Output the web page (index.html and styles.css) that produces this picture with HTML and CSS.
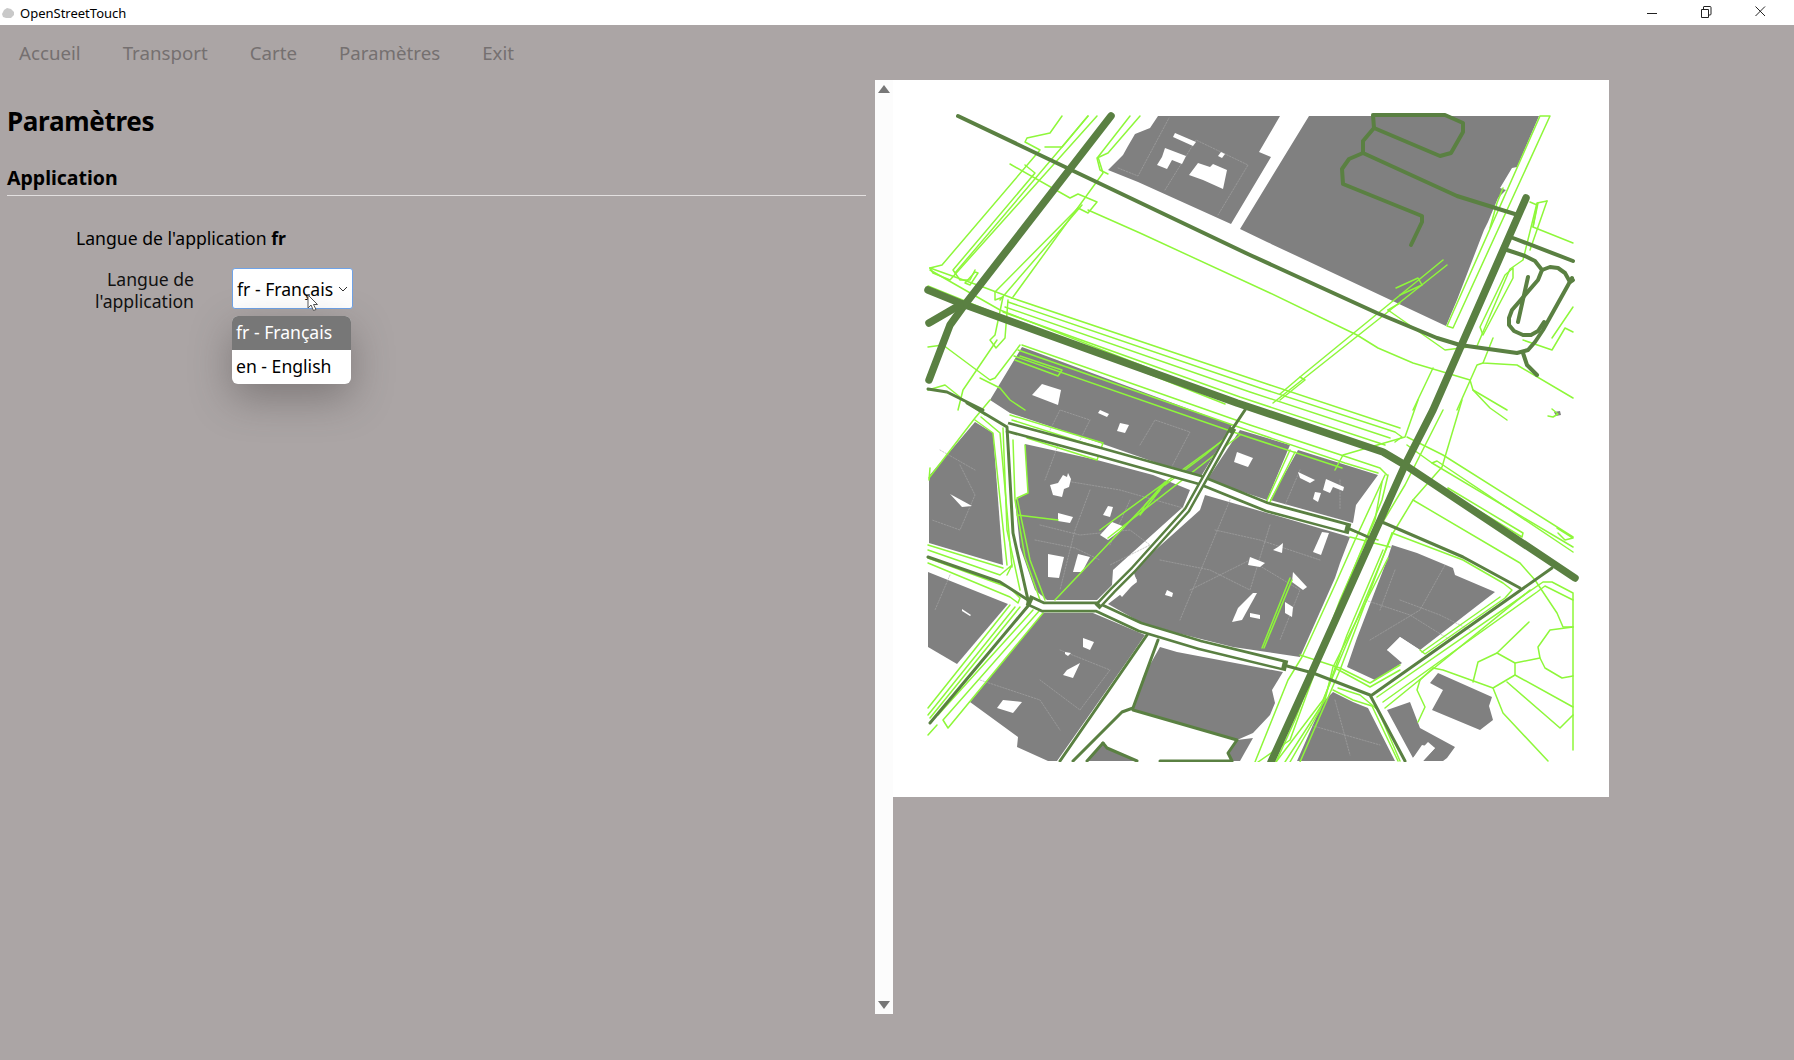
FILE: index.html
```html
<!DOCTYPE html>
<html lang="fr">
<head>
  <meta charset="UTF-8" />
  <title>OpenStreetTouch</title>
  <link rel="stylesheet" href="styles.css">
</head>
<body>
  <header class="titlebar">
    <svg class="app-icon" viewBox="0 0 14 14"><path d="M1 8 L3 4 L6 2 L10 3 L13 6 L13 9 L10 12 L5 12 L2 11 Z" /></svg>
    <span class="app-name">OpenStreetTouch</span>
    <div class="win-controls">
      <svg viewBox="0 0 54 18"><path d="M0 9.5 H10" /></svg>
      <svg viewBox="0 0 54 18"><path d="M0.5 5.5 H7.5 V13.5 H0.5 Z M2.5 5 V3 Q2.5 2.5 3 2.5 H9 Q10 2.5 10 3.5 V10 Q10 11 9 11 H8" /></svg>
      <svg class="close" viewBox="0 0 39 18"><path d="M0.5 2.5 L10 12 M10 2.5 L0.5 12" /></svg>
    </div>
  </header>

  <div class="content">
    <div class="left-panel">
      <nav class="menu">
        <a>Accueil</a>
        <a>Transport</a>
        <a>Carte</a>
        <a>Paramètres</a>
        <a>Exit</a>
      </nav>

      <h1>Paramètres</h1>
      <h2>Application</h2>

      <p class="current-lang">Langue de l'application <b>fr</b></p>

      <div class="lang-row">
        <label>Langue de l'application</label>
        <div class="select">
          <span>fr - Français</span>
          <svg class="chevron" viewBox="0 0 10 6"><path d="M1 1 L5 5 L9 1" /></svg>
          <div class="dropdown">
            <div class="option selected">fr - Français</div>
            <div class="option">en - English</div>
          </div>
          <svg class="cursor" viewBox="0 0 12 18"><path d="M1 1 V14 L4 11 L6.5 16.5 L9 15.5 L6.5 10.5 L10.5 10.5 Z" /></svg>
        </div>
      </div>
    </div>

    <div class="viewer">
      <div class="scrollbar">
        <span class="arrow up"></span>
        <span class="arrow down"></span>
      </div>
      <svg class="map" viewBox="893 80 716 717">
        <defs>
          <clipPath id="mapclip"><rect x="923" y="111" width="658" height="651" /></clipPath>
        </defs>
        <g clip-path="url(#mapclip)">
          <!-- blocks -->
          <g class="block">
            <polygon points="1158,116 1280,116 1259,152 1271,157 1231,224 1138,182 1108,170 1123,155 1128,146 1135,134 1150,128" />
            <polygon points="1309,116 1539,116 1517,167 1512,168 1500,188 1506,190 1498,198 1488,222 1484,230 1457,300 1446,326 1267,242 1240,229" />
            <polygon points="1022,347 1232,425 1200,478 1100,443 1010,413 990,400" />
            <polygon points="929,476 975,422 993,433 1003,565 929,543" />
            <polygon points="1025,444 1097,460 1153,475 1190,490 1183,507 1113,570 1112,585 1097,600 1047,600 1035,590 1020,547 1015,500 1028,493" />
            <polygon points="1205,495 1350,537 1340,563 1335,578 1300,657 1233,647 1177,633 1140,622 1108,604 1137,582 1133,570 1200,510" />
            <polygon points="1240,430 1290,445 1267,500 1207,480" />
            <polygon points="1298,450 1378,475 1356,505 1353,523 1270,500" />
            <polygon points="928,572 1008,604 957,664 928,647" />
            <polygon points="1043,613 970,702 1018,737 1017,747 1048,761 1057,761 1130,657 1145,635 1093,613" />
            <polygon points="1160,647 1177,652 1283,672 1272,690 1275,703 1270,715 1253,733 1237,740 1133,710 1140,690 1143,677" />
            <polygon points="1237,740 1253,738 1240,761 1232,761 1228,753" />
            <polygon points="1103,743 1087,761 1137,761 1107,748" />
            <polygon points="1392,545 1417,553 1453,568 1455,575 1495,592 1420,650 1400,637 1387,650 1402,663 1375,680 1347,667 1357,638 1387,560" />
            <polygon points="1333,692 1353,702 1368,708 1395,761 1297,761 1323,702" />
            <polygon points="1387,710 1410,702 1420,728 1455,747 1447,758 1443,761 1423,761 1435,748 1422,745 1413,758 1407,747" />
            <polygon points="1438,673 1492,697 1489,706 1493,720 1480,730 1432,710 1443,690 1430,683" />
            <polygon points="1554,412 1560,411 1561,415 1556,416" />
          </g>

          <!-- lot lines -->
          <g class="lot">
            <polyline points="1118,168 1138,176 1169,118" />
            <polyline points="1165,190 1196,140 1248,165 1218,215" />
            <polyline points="1050,430 1060,410 1090,420 1075,450" />
            <polyline points="1140,445 1155,420 1190,432 1170,470" />
            <polyline points="960,465 975,495 960,530 932,520" />
            <polyline points="1040,525 1080,535 1130,530 1150,545 1110,565" />
            <polyline points="1060,480 1120,490 1190,510" />
            <polyline points="1215,530 1260,540 1320,560" />
            <polyline points="1190,590 1250,560 1300,590 1280,640" />
            <polyline points="1060,650 1110,670 1080,710 1040,680" />
            <polyline points="980,680 1040,700 1060,730" />
            <polyline points="1400,600 1440,615 1470,630" />
            <polyline points="1370,640 1420,610 1445,565" />
            <polyline points="1310,725 1380,745" />
            <polyline points="1335,700 1350,755" />
            <polyline points="1035,540 1075,548 1100,560" />
            <polyline points="1090,490 1075,530 1060,590" />
            <polyline points="1130,500 1110,545" />
            <polyline points="1230,500 1205,560 1180,620" />
            <polyline points="1270,525 1250,590" />
            <polyline points="1160,560 1210,570 1250,590" />
            <polyline points="1365,600 1410,615 1450,640" />
            <polyline points="1395,570 1380,610" />
            <polyline points="1300,470 1285,505" />
            <polyline points="1340,480 1340,510" />
            <polyline points="1060,440 1045,480" />
            <polyline points="940,450 975,470" />
            <polyline points="950,575 935,610" />
          </g>

          <!-- buildings -->
          <g class="hole">
            <polygon points="1175,133 1196,142 1193,146 1173,137" />
            <polygon points="1165,148 1186,156 1182,164 1172,160 1167,169 1157,165 1162,157" />
            <polygon points="1198,163 1210,167 1213,164 1227,170 1223,189 1203,180 1189,175" />
            <polygon points="1221,152 1225,154 1222,158 1218,156" />
            <polygon points="1042,384 1061,390 1058,405 1032,395" />
            <polygon points="1100,410 1109,414 1107,417 1098,413" />
            <polygon points="1120,423 1129,425 1125,433 1117,431" />
            <polygon points="1237,452 1253,458 1248,467 1234,462" />
            <polygon points="1063,475 1067,477 1068,473 1071,479 1069,487 1064,489 1062,497 1053,495 1050,485 1058,483" />
            <polygon points="1058,513 1073,517 1070,523 1058,521" />
            <polygon points="1108,506 1113,507 1110,517 1103,515" />
            <polygon points="1112,522 1125,527 1108,540 1100,535" />
            <polygon points="1048,554 1064,557 1059,578 1048,577" />
            <polygon points="1078,554 1090,557 1082,572 1073,572" />
            <polygon points="950,494 972,506 962,507" />
            <polygon points="1113,573 1130,570 1137,580 1122,597 1113,587" />
            <polygon points="1250,557 1265,563 1260,567 1248,565" />
            <polygon points="1278,547 1283,543 1282,553 1273,550" />
            <polygon points="1253,593 1257,593 1242,620 1232,622 1238,608" />
            <polygon points="1250,613 1260,615 1260,619 1250,617" />
            <polygon points="1167,590 1173,593 1172,597 1165,595" />
            <polygon points="1293,572 1307,587 1303,590 1292,582" />
            <polygon points="1285,602 1293,607 1292,617 1285,613" />
            <polygon points="1298,472 1315,480 1310,483 1300,478" />
            <polygon points="1326,479 1344,487 1343,491 1333,487 1330,493 1323,490" />
            <polygon points="1315,492 1321,493 1318,502 1313,499" />
            <polygon points="1322,532 1329,533 1321,555 1313,552" />
            <polygon points="962,609 971,615 970,616 962,611" />
            <polygon points="1065,652 1071,653 1068,656 1065,654" />
            <polygon points="1083,638 1094,642 1090,650 1083,647" />
            <polygon points="1067,670 1080,663 1073,678 1063,675" />
            <polygon points="1003,700 1022,702 1013,713 997,708" />
            <polygon points="1400,637 1420,650 1408,662 1387,650" />
            <polygon points="1428,742 1435,748 1423,761 1413,758" />
          </g>

          <!-- lime paths -->
          <g class="lime">
            <polyline points="1062,116 1050,133 1027,138 1025,142 1040,150 942,265 930,268" />
            <polyline points="1088,116 1062,147 1045,147" />
            <polyline points="1088,116 1062,147 955,273" />
            <polyline points="1097,116 950,280 933,273 930,268" />
            <polyline points="1130,116 1098,157 1103,173 1013,297" />
            <polyline points="1140,116 1108,153 1097,158 1100,170 1108,174" />
            <polyline points="1025,165 1035,173 953,270 960,280 970,280 975,270" />
            <polyline points="965,283 975,272 978,273 970,285 965,283" />
            <polyline points="1010,164 1070,198 1078,194 1097,202 1088,213 1078,208 995,292 995,300 1003,297" />
            <polyline points="1088,210 1140,233 1270,293 1357,335 1378,348 1413,363 1470,380 1473,390 1507,410" />
            <polyline points="1082,205 1000,300" />
            <polyline points="930,268 983,287 1012,298" />

            <polyline points="1012,298 1270,385 1400,428" />
            <polyline points="1008,302 1260,388 1395,432 1402,437 1395,442" />
            <polyline points="1005,307 1250,392 1390,438" />
            <polyline points="1003,312 1240,397 1385,445" />
            <polyline points="930,270 1000,310 1230,400" />
            <polyline points="928,286 1002,316 1225,404" />
            <polyline points="1003,297 995,335 990,340 996,348 1005,338 1008,300" />
            <polyline points="928,347 943,345 990,380 995,378 1020,345" />
            <polyline points="997,340 963,390 958,410" />

            <polyline points="1022,345 1250,425 1347,457 1380,468 1387,475" />
            <polyline points="1018,350 1250,431 1345,463 1378,473" />
            <polyline points="1014,356 1245,436 1342,468" />
            <polyline points="1020,356 1062,370 1058,376 1015,360" />

            <polyline points="1540,116 1550,116 1453,328 1447,326 1540,116" />
            <polyline points="1503,188 1497,203 1490,228" />

            <polyline points="1418,400 1405,437 1343,455 1335,470" />
            <polyline points="1462,400 1442,467 1413,500 1393,533 1323,700 1276,762" />
            <polyline points="1443,410 1405,485 1375,535" />
            <polyline points="1407,437 1443,455 1573,537" />
            <polyline points="1432,463 1437,461 1573,552" />
            <polyline points="1407,445 1432,463 1573,547" />
            <polyline points="1448,488 1523,533 1522,537 1448,492 1448,488" />
            <polyline points="1413,500 1520,563 1535,580 1557,613 1563,627 1573,627" />
            <polyline points="1557,528 1573,538 1565,540 1558,533" />

            <polyline points="1382,482 1375,520 1340,600 1295,720 1276,762" />
            <polyline points="1388,475 1382,500 1345,590 1290,740 1258,762" />
            <polyline points="1385,475 1355,540 1335,585 1302,657 1288,680 1255,762" />
            <polyline points="1392,533 1340,670 1300,762" />
            <polyline points="1388,558 1333,667 1325,700 1285,762" />
            <polyline points="1383,550 1347,635 1320,710 1290,762" />

            <polyline points="1392,533 1463,560 1503,583 1512,590 1505,598 1425,654 1420,650" />
            <polyline points="1500,597 1422,652" />
            <polyline points="1350,537 1390,547" />
            <polyline points="1300,655 1340,668 1370,683 1375,680 1400,665" />
            <polyline points="1335,668 1370,687 1400,670" />
            <polyline points="1333,690 1353,700 1372,706 1398,761" />
            <polyline points="1338,688 1360,695 1378,710 1400,761" />

            <polyline points="1377,697 1543,582 1552,582 1573,593 1573,750" />
            <polyline points="1383,702 1537,592 1545,586 1573,600" />
            <polyline points="1385,708 1530,590" />
            <polyline points="1433,668 1443,670 1493,688 1515,675 1515,663 1497,653 1478,662 1473,682" />
            <polyline points="1420,680 1417,690 1425,707 1418,722" />
            <polyline points="1420,680 1433,668" />
            <polyline points="1497,653 1529,622" />
            <polyline points="1515,663 1540,658 1538,647 1550,630 1573,627" />
            <polyline points="1540,658 1545,668 1562,678 1573,676" />
            <polyline points="1515,675 1573,707" />
            <polyline points="1507,682 1560,728 1573,715" />
            <polyline points="1493,688 1503,713 1548,761" />

            <polyline points="1300,377 1443,260" />
            <polyline points="1273,403 1447,265" />
            <polyline points="1388,310 1445,350 1477,346 1510,269 1523,260 1537,203 1547,201" />
            <polyline points="1388,310 1400,303" />
            <polyline points="1513,268 1505,275 1480,327 1483,335 1513,278 1513,268" />
            <polyline points="1493,338 1483,363 1517,365 1573,398" />
            <polyline points="1483,363 1477,365 1457,410" />
            <polyline points="1433,368 1413,410" />
            <polyline points="1523,340 1552,350 1565,328 1573,332" />
            <polyline points="1552,338 1573,307" />
            <polyline points="1538,203 1533,227 1573,243" />
            <polyline points="1530,202 1537,205 1533,227" />
            <polyline points="1547,201 1530,250" />
            <polyline points="1473,390 1490,408 1507,420" />
            <polyline points="1396,288 1418,278 1422,285 1400,295" />
            <polyline points="1280,394 1300,377 1305,380 1280,400" />
            <polyline points="1552,409 1558,414 1553,417 1548,416" />

            <polyline points="975,420 993,433 1007,565" />
            <polyline points="981,417 1000,433 1012,567" />
            <polyline points="1013,440 1015,500 1025,557 1040,600" />
            <polyline points="1025,445 1028,493 1017,498 1030,560 1045,600" />
            <polyline points="1003,428 1007,530 1020,590" />
            <polyline points="1010,415 1103,443 1097,460 1027,438" />
            <polyline points="1012,420 1100,448" />
            <polyline points="1010,425 1098,453" />
            <polyline points="990,400 975,418 929,478" />
            <polyline points="1017,515 1058,520" />
            <polyline points="930,468 929,480" />
            <polyline points="980,378 1000,388 1010,400 1025,410" />
            <polyline points="928,390 945,385 970,405 985,415" />

            <polyline points="928,545 1003,568" />
            <polyline points="928,563 1010,597 1018,603 1020,598 1010,588 928,558" />
            <polyline points="928,550 1000,575 1012,565 1007,575" />
            <polyline points="1010,605 928,708" />
            <polyline points="1015,607 928,715" />
            <polyline points="1020,607 930,718" />
            <polyline points="1040,610 943,720 948,728 1043,613" />
            <polyline points="1033,610 938,715" />
            <polyline points="928,735 937,725" />

            <polyline points="1055,600 1147,503 1167,482" />
            <polyline points="1100,530 1233,433" />
            <polyline points="1108,538 1240,435" />
            <polyline points="1160,490 1140,515 1145,505 1165,482" />
            <polyline points="1165,485 1205,455 1235,430" />
            <polyline points="1265,505 1290,450" />
            <polyline points="1268,506 1295,452" />
            <polyline points="1262,648 1290,578" />
            <polyline points="1264,648 1292,580" />
            <polyline points="1378,540 1350,530" />
          </g>

          <!-- streets -->
          <g class="street-edge">
            <polyline points="1007,427 1100,452 1200,480 1267,507 1350,529" />
            <polyline points="1028,600 1043,607 1097,607 1140,627 1200,645 1287,666" />
          </g>
          <g class="street-core">
            <polyline points="1007,427 1100,452 1200,480 1267,507 1345,528" />
            <polyline points="1032,602 1043,607 1097,607 1140,627 1200,645 1282,665" />
          </g>
          <g class="lane-edge">
            <polyline points="1097,607 1113,590 1133,570 1187,510 1233,428" />
          </g>
          <g class="lane-core">
            <polyline points="1100,604 1113,590 1133,570 1187,510 1230,433" />
          </g>
          <g class="thin">
            <polyline points="1233,428 1247,407" />
            <polyline points="1350,529 1368,537" />
            <polyline points="967,403 1007,427 1013,533 1028,600 1028,606 930,723" />
            <polyline points="928,557 1000,582 1028,600" />
            <polyline points="928,389 947,392 983,410" />
            <polyline points="1147,635 1060,761" />
            <polyline points="1158,640 1133,708 1122,712 1073,761" />
            <polyline points="1103,743 1087,761" />
            <polyline points="1103,743 1107,748 1137,761" />
            <polyline points="1133,710 1237,740 1228,753 1232,761 1160,761" />
            <polyline points="1287,666 1313,673 1370,695 1405,761" />
            <polyline points="1382,522 1463,557 1520,588" />
            <polyline points="1552,568 1372,695" />
          </g>
          <g class="road">
            <polyline points="1373,115 1445,115 1463,123 1463,132 1451,153 1440,156 1374,128 1373,115" />
            <polyline points="1374,128 1363,141 1363,153 1457,196 1518,215" />
            <polyline points="1363,153 1349,159 1342,169 1343,184 1422,216 1422,222 1411,245" />
            <polyline points="958,116 1250,255 1377,313 1437,338 1460,345 1517,353 1528,350 1535,342 1543,330 1572,278" />
            <polyline points="1513,238 1573,261" />
            <polyline points="1507,250 1525,256 1535,261 1542,270 1538,280 1512,310 1509,318 1509,325 1514,331 1523,335 1531,335 1538,331 1544,322" />
            <polyline points="1542,270 1550,267 1558,268 1565,273 1570,282 1573,280" />
            <polyline points="1528,277 1518,322" />
            <polyline points="1523,353 1527,365 1537,375" />
          </g>
          <g class="thick">
            <polyline points="928,290 960,303 1237,403 1383,452 1405,465 1575,578" />
            <polyline points="1111,116 963,307 950,325 929,380" />
            <polyline points="929,323 960,305" />
            <polyline points="1526,198 1433,410 1405,465 1312,672 1271,762" />
          </g>
        </g>
      </svg>
    </div>
  </div>
</body>
</html>
```

FILE: styles.css
```css
* {
  box-sizing: border-box;
}
body {
  margin: 0;
  width: 1794px;
  height: 1060px;
  overflow: hidden;
  background: #aba5a5;
  font-family: "Noto Sans", "Open Sans", sans-serif;
  color: #000;
}

/* window title */
.titlebar {
  display: flex;
  align-items: center;
  height: 25px;
  background: #fff;
  font-size: 13px;
}
.app-icon {
  width: 14px;
  height: 14px;
  margin: 0 5px 0 1px;
  fill: #c9c9c9;
}
.app-name {
  flex: 1;
}
.win-controls {
  display: flex;
}
.win-controls svg {
  width: 54px;
  height: 18px;
  fill: none;
  stroke: #222;
  stroke-width: 1;
}
.win-controls svg.close {
  width: 39px;
}

.content {
  display: flex;
  align-items: flex-start;
}

/* left part */
.left-panel {
  width: 875px;
  padding-left: 7px;
}
.menu {
  display: flex;
  height: 54px;
  align-items: center;
  padding-left: 12px;
  gap: 42px;
  font-size: 18.7px;
  color: #757070;
}
h1 {
  margin: 23px 0 0;
  font-size: 26px;
  letter-spacing: -0.3px;
  line-height: 38px;
}
h2 {
  margin: 23px 0 0;
  padding-bottom: 2px;
  width: 859px;
  font-size: 19.5px;
  line-height: 30px;
  border-bottom: 1px solid #e3e0e0;
}
.current-lang {
  margin: 30px 0 0 69px;
  font-size: 17.6px;
  line-height: 24px;
}
.lang-row {
  display: flex;
  align-items: flex-start;
  margin-top: 18px;
}
.lang-row label {
  width: 187px;
  padding-left: 60px;
  text-align: right;
  font-size: 17.6px;
  line-height: 22px;
  color: #111;
}
.select {
  position: relative;
  display: flex;
  align-items: center;
  justify-content: space-between;
  width: 121px;
  height: 41px;
  margin-left: 38px;
  padding: 0 4px 0 4px;
  background: #fff;
  border: 1px solid #6fa3e8;
  border-radius: 3px;
  font-size: 17.6px;
}
.chevron {
  width: 10px;
  height: 6px;
  fill: none;
  stroke: #333;
}
.dropdown {
  position: absolute;
  top: 47px;
  left: -1px;
  width: 119px;
  background: #fff;
  border-radius: 6px;
  overflow: hidden;
  box-shadow: 0 14px 40px rgba(60, 55, 55, 0.4);
}
.option {
  height: 34px;
  line-height: 33px;
  padding-left: 4px;
}
.option.selected {
  background: #777;
  color: #fff;
}
.cursor {
  position: absolute;
  top: 25px;
  left: 74px;
  width: 12px;
  height: 18px;
  fill: #fff;
  stroke: #555;
}

/* map */
.viewer {
  display: flex;
  align-items: flex-start;
  margin-top: 55px;
}
.scrollbar {
  display: flex;
  flex-direction: column;
  justify-content: space-between;
  align-items: center;
  width: 18px;
  height: 934px;
  padding: 5px 0;
  background: #fcfcfc;
}
.arrow {
  width: 0;
  height: 0;
  border-left: 6px solid transparent;
  border-right: 6px solid transparent;
}
.arrow.up {
  border-bottom: 8px solid #777;
}
.arrow.down {
  border-top: 8px solid #777;
}
.map {
  display: block;
  width: 716px;
  height: 717px;
  background: #fff;
}
.map polyline {
  fill: none;
  stroke-linecap: round;
  stroke-linejoin: round;
}
.block polygon {
  fill: #808080;
}
.hole polygon {
  fill: #fff;
}
.lot polyline {
  stroke: #a8a8a8;
  stroke-width: 0.6;
  stroke-dasharray: 1.5 1.5;
}
.lime polyline {
  stroke: #8ef73a;
  stroke-width: 1.5;
}
.map .street-edge polyline,
.map .street-core polyline,
.map .lane-edge polyline,
.map .lane-core polyline {
  stroke-linecap: butt;
}
.street-edge polyline {
  stroke: #5a8042;
  stroke-width: 11;
}
.street-core polyline {
  stroke: #fff;
  stroke-width: 5.5;
}
.lane-edge polyline {
  stroke: #5a8042;
  stroke-width: 7;
}
.lane-core polyline {
  stroke: #fff;
  stroke-width: 2;
}
.thin polyline {
  stroke: #5a8042;
  stroke-width: 3;
}
.road polyline {
  stroke: #5a8042;
  stroke-width: 4;
}
.thick polyline {
  stroke: #5a8042;
  stroke-width: 7.5;
}
```
